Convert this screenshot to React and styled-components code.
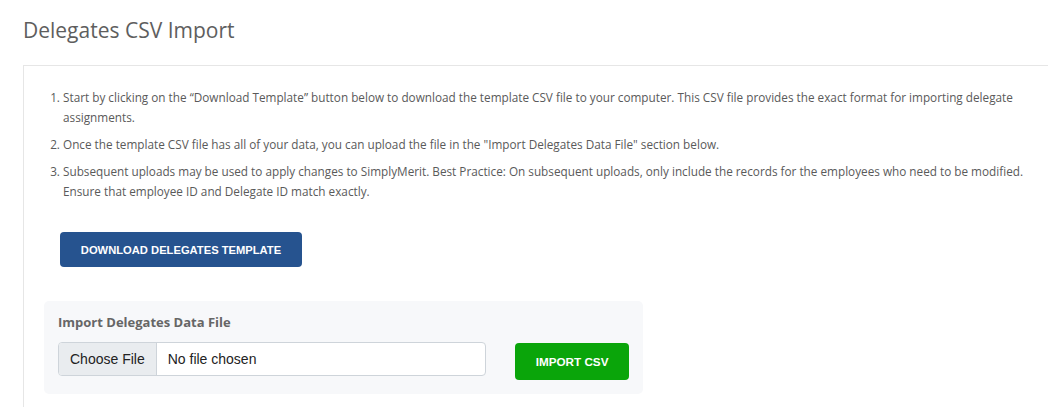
import React from "react";
import styled, { createGlobalStyle } from "styled-components";

const Global = createGlobalStyle`
  html, body { margin: 0; padding: 0; background: #fff; }
  body { font-family: "Open Sans", "Noto Sans", sans-serif; }
`;

const Page = styled.div`
  padding: 17px 0 0 23px;
  width: 1048px;
  box-sizing: border-box;
  overflow: hidden;
`;

const Title = styled.h1`
  margin: 0 0 22px 0;
  font-family: "Open Sans", sans-serif;
  font-weight: 400;
  font-size: 21px;
  line-height: 26px;
  color: #5e5e5e;
`;

const Panel = styled.section`
  border: 1px solid #e6e6e6;
  border-right: none;
  padding: 21px 0 13px 20px;
  margin-right: -10px;
`;

const Steps = styled.ol`
  margin: 0;
  padding: 0 24px 0 19px;
  font-size: 11.75px;
  line-height: 20px;
  color: #5a5a5a;
`;

const Step = styled.li`
  margin-bottom: 7px;
`;

const PrimaryButton = styled.button`
  display: inline-flex;
  align-items: center;
  justify-content: center;
  margin: 24px 0 0 16px;
  width: 242px;
  height: 35px;
  border: none;
  border-radius: 4px;
  background: #26538f;
  color: #fff;
  font-family: "Liberation Sans", Arial, sans-serif;
  font-weight: 700;
  font-size: 11.2px;
`;

const ImportBox = styled.div`
  margin-top: 34px;
  width: 599px;
  box-sizing: border-box;
  background: #f7f8fa;
  border-radius: 5px;
  padding: 12px 14px 14px 14px;
`;

const Label = styled.div`
  font-weight: 700;
  font-size: 13px;
  line-height: 18px;
  color: #666;
  margin-bottom: 11px;
`;

const Row = styled.div`
  display: flex;
  align-items: flex-start;
  gap: 29px;
`;

const FileInput = styled.div`
  display: flex;
  width: 429px;
  height: 34px;
  box-sizing: border-box;
  border: 1px solid #ced4da;
  border-radius: 4px;
  background: #fff;
  overflow: hidden;
  font-family: "Liberation Sans", Arial, sans-serif;
  font-size: 14px;
  color: #222;
`;

const ChooseBtn = styled.span`
  display: flex;
  align-items: center;
  padding: 0 11px;
  background: #e9ecef;
  border-right: 1px solid #ced4da;
`;

const FileName = styled.span`
  display: flex;
  align-items: center;
  padding: 0 11px;
`;

const GreenButton = styled.button`
  width: 114px;
  height: 37px;
  margin-top: 1px;
  border: none;
  border-radius: 4px;
  background: #0aa50a;
  color: #fff;
  font-family: "Liberation Sans", Arial, sans-serif;
  font-weight: 700;
  font-size: 11.7px;
`;

export default function App() {
  return (
    <>
      <Global />
      <Page>
        <Title>Delegates CSV Import</Title>
        <Panel>
          <Steps>
            <Step>
              Start by clicking on the “Download Template” button below to download the template CSV file to your computer. This CSV file provides the exact format for importing delegate assignments.
            </Step>
            <Step>
              Once the template CSV file has all of your data, you can upload the file in the "Import Delegates Data File" section below.
            </Step>
            <Step>
              Subsequent uploads may be used to apply changes to SimplyMerit. Best Practice: On subsequent uploads, only include the records for the employees who need to be modified. Ensure that employee ID and Delegate ID match exactly.
            </Step>
          </Steps>
          <PrimaryButton>DOWNLOAD DELEGATES TEMPLATE</PrimaryButton>
          <ImportBox>
            <Label>Import Delegates Data File</Label>
            <Row>
              <FileInput>
                <ChooseBtn>Choose File</ChooseBtn>
                <FileName>No file chosen</FileName>
              </FileInput>
              <GreenButton>IMPORT CSV</GreenButton>
            </Row>
          </ImportBox>
        </Panel>
      </Page>
    </>
  );
}
